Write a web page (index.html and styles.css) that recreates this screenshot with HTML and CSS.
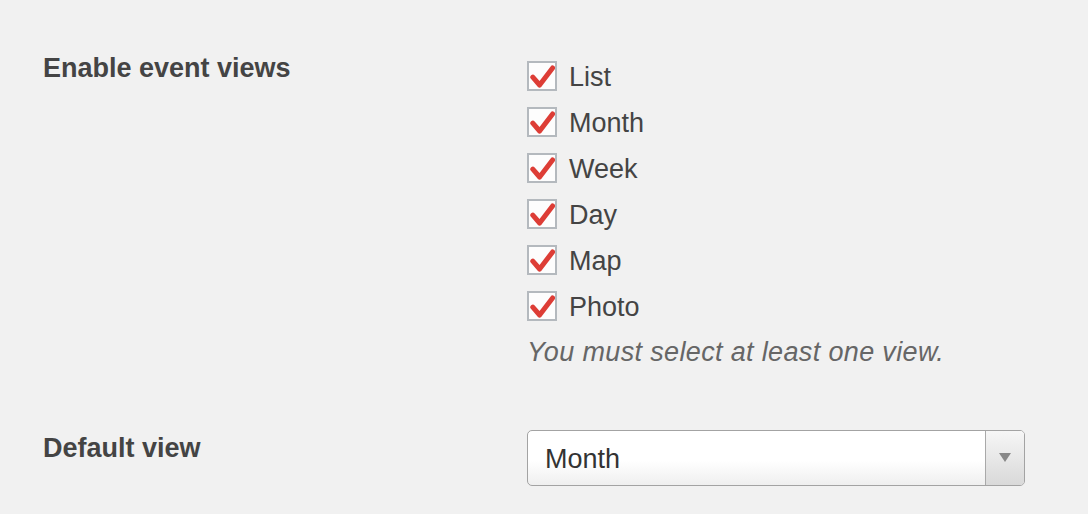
FILE: index.html
```html
<!DOCTYPE html>
<html>
<head>
<meta charset="utf-8">
<link rel="stylesheet" href="styles.css">
</head>
<body>
<div class="form">
  <div class="row row-views">
    <div class="th">Enable event views</div>
    <div class="td">
      <ul class="checks">
        <li class="check"><span class="box"><svg viewBox="0 0 26 26"><polyline points="3.8,14.2 10.6,22 23.6,5"/></svg></span><span>List</span></li>
        <li class="check"><span class="box"><svg viewBox="0 0 26 26"><polyline points="3.8,14.2 10.6,22 23.6,5"/></svg></span><span>Month</span></li>
        <li class="check"><span class="box"><svg viewBox="0 0 26 26"><polyline points="3.8,14.2 10.6,22 23.6,5"/></svg></span><span>Week</span></li>
        <li class="check"><span class="box"><svg viewBox="0 0 26 26"><polyline points="3.8,14.2 10.6,22 23.6,5"/></svg></span><span>Day</span></li>
        <li class="check"><span class="box"><svg viewBox="0 0 26 26"><polyline points="3.8,14.2 10.6,22 23.6,5"/></svg></span><span>Map</span></li>
        <li class="check"><span class="box"><svg viewBox="0 0 26 26"><polyline points="3.8,14.2 10.6,22 23.6,5"/></svg></span><span>Photo</span></li>
      </ul>
      <p class="desc">You must select at least one view.</p>
    </div>
  </div>
  <div class="row row-default">
    <div class="th">Default view</div>
    <div class="td">
      <div class="select">
        <span class="value">Month</span>
        <span class="arrow"><span class="tri"></span></span>
      </div>
    </div>
  </div>
</div>
</body>
</html>
```

FILE: styles.css
```css
html, body {
  margin: 0;
  padding: 0;
  background: #f1f1f1;
}
body {
  font-family: "Liberation Sans", Arial, sans-serif;
  font-size: 27px;
  color: #444;
}
.form {
  padding-left: 43px;
}
.row {
  display: grid;
  grid-template-columns: 484px 498px;
}
.row-views {
  padding-top: 49px;
}
.row-default {
  margin-top: 63px;
}
.th {
  font-weight: bold;
  line-height: 35px;
  padding-top: 2px;
  color: #444;
}
.row-default .th {
  padding-top: 1px;
}
.row-views .td {
  padding-top: 5px;
}
.checks {
  list-style: none;
  margin: 0;
  padding: 0;
}
.check {
  display: flex;
  align-items: center;
  height: 46px;
  line-height: 46px;
}
.box {
  box-sizing: border-box;
  width: 30px;
  height: 30px;
  border: 2px solid #b4b9be;
  background: #fdfdfd;
  margin-right: 12px;
  margin-bottom: 2px;
  display: flex;
}
.box svg {
  width: 26px;
  height: 26px;
}
.box polyline {
  fill: none;
  stroke: #dd3d36;
  stroke-width: 5;
  stroke-linecap: round;
  stroke-linejoin: round;
}
.desc {
  margin: 7px 0 0;
  line-height: 30px;
  font-style: italic;
  letter-spacing: 0.35px;
  color: #666;
}
.select {
  box-sizing: border-box;
  height: 56px;
  width: 498px;
  border: 1px solid #a3a3a3;
  border-radius: 5px;
  background: linear-gradient(#ffffff 55%, #efefef);
  display: flex;
  align-items: center;
  overflow: hidden;
}
.value {
  flex: 1;
  padding-left: 17px;
  padding-top: 3px;
  color: #333;
}
.arrow {
  width: 38px;
  height: 100%;
  border-left: 1px solid #a9a9a9;
  background: linear-gradient(#f6f6f6, #d9d9d9);
  display: flex;
  align-items: center;
  justify-content: center;
}
.tri {
  width: 0;
  height: 0;
  border-left: 6px solid transparent;
  border-right: 6px solid transparent;
  border-top: 9px solid #888;
  margin-top: -1px;
}
```
